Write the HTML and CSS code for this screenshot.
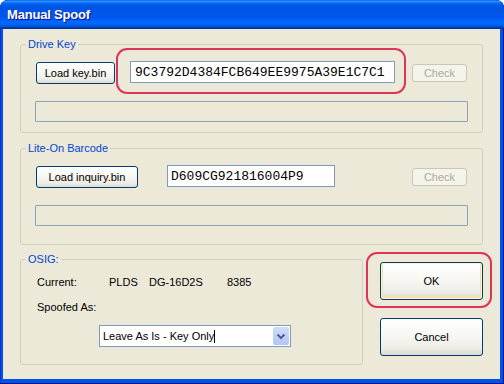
FILE: index.html
```html
<!DOCTYPE html>
<html>
<head>
    <title>Manual Spoof</title>
    <link rel="stylesheet" href="styles.css">
</head>
<body>
    <div class="window">
        <div class="titlebar">
            <span class="title">Manual Spoof</span>
        </div>

        <div class="client">
            <fieldset class="group">
                <legend>Drive Key</legend>
                <div class="group-body body-key">
                    <div class="row">
                        <button class="btn btn-key">Load key.bin</button>
                        <div class="mark mark-key">
                            <input class="field field-key" type="text" value="9C3792D4384FCB649EE9975A39E1C7C1" readonly>
                        </div>
                        <button class="btn btn-check" disabled>Check</button>
                    </div>
                    <div class="progress"></div>
                </div>
            </fieldset>

            <fieldset class="group group-barcode">
                <legend>Lite-On Barcode</legend>
                <div class="group-body body-barcode">
                    <div class="row">
                        <button class="btn btn-inquiry">Load inquiry.bin</button>
                        <input class="field field-barcode" type="text" value="D609CG921816004P9" readonly>
                        <button class="btn btn-check" disabled>Check</button>
                    </div>
                    <div class="progress"></div>
                </div>
            </fieldset>

            <div class="bottom">
                <fieldset class="group group-osig">
                    <legend>OSIG:</legend>
                    <div class="group-body body-osig">
                        <div class="info">
                            <span class="info-label">Current:</span>
                            <span class="info-vendor">PLDS</span>
                            <span class="info-model">DG-16D2S</span>
                            <span>8385</span>
                        </div>
                        <div class="info info-spoof">Spoofed As:</div>
                        <div class="combo">
                            <span class="combo-text">Leave As Is - Key Only</span><span class="caret"></span>
                            <span class="combo-btn">
                                <svg width="16" height="19" viewBox="0 0 16 19">
                                    <polyline points="4.5,7.5 8,11 11.5,7.5" fill="none" stroke="#4d6185" stroke-width="2"/>
                                </svg>
                            </span>
                        </div>
                    </div>
                </fieldset>

                <div class="actions">
                    <div class="mark mark-ok">
                        <button class="btn btn-big btn-ok">OK</button>
                    </div>
                    <button class="btn btn-big btn-cancel">Cancel</button>
                </div>
            </div>
        </div>
    </div>
</body>
</html>
```

FILE: styles.css
```css
body {
    margin: 0;
    background-color: #ffffff;
    font-family: "Liberation Sans", Arial, sans-serif;
    font-size: 11px;
}

.window {
    width: 504px;
    height: 384px;
    display: flex;
    flex-direction: column;
    background-color: #0054e3;
    border-radius: 8px 8px 0 0;
    box-shadow: inset -1px -1px #00138c, inset 1px 1px #0831d9;
    overflow: hidden;
}

.titlebar {
    height: 29px;
    flex: none;
    display: flex;
    align-items: center;
    padding-left: 7px;
    border-radius: 8px 8px 0 0;
    background: linear-gradient(180deg, #0058ee 0%, #3593ff 4%, #288eff 6%, #127dff 8%, #036ffc 10%, #0262ee 14%, #0057e5 20%, #0054e3 24%, #0055eb 56%, #005bf5 66%, #026afe 76%, #0062ef 86%, #0052d6 92%, #0040ab 94%, #003092 100%);
}

.title {
    color: #ffffff;
    font-weight: bold;
    font-size: 13px;
    text-shadow: 1px 1px #0f1089;
    letter-spacing: -0.2px;
}

.client {
    flex: 1;
    margin: 0 4px 5px 3px;
    padding: 9px 17px 0 17px;
    background-color: #ece9d8;
}

/* group boxes */
.group {
    margin: 0;
    padding: 0;
    border: 1px solid #d0d0bf;
    border-radius: 3px;
    width: 463px;
    box-sizing: border-box;
}

.group legend {
    margin-left: 5px;
    padding: 0 2px;
    line-height: 13px;
    color: #0046d5;
}

.group-barcode {
    margin-top: 9px;
}

.bottom {
    margin-top: 8px;
    display: flex;
    align-items: flex-start;
}

.group-osig {
    width: 343px;
}

.group-body {
    padding: 11px 14px 10px;
}

.body-barcode {
    padding-bottom: 18px;
}

.body-osig {
    padding: 10px 15px 17px 16px;
}

.row {
    display: flex;
    align-items: center;
    height: 22px;
    padding: 0 1px;
}

.progress {
    margin-top: 17px;
    height: 21px;
    box-sizing: border-box;
    border: 1px solid #8ea3ba;
    border-radius: 1px;
}

/* buttons */
.btn {
    box-sizing: border-box;
    height: 22px;
    padding: 0;
    font-family: "Liberation Sans", Arial, sans-serif;
    font-size: 11px;
    color: #000000;
    border: 1px solid #003c74;
    border-radius: 3px;
    background: linear-gradient(180deg, #ffffff 0%, #f8f7f3 45%, #eeede7 80%, #dcd8cd 100%);
}

.btn-key {
    width: 79px;
}

.btn-inquiry {
    width: 102px;
}

.btn-check {
    width: 55px;
    height: 18px;
    margin-left: auto;
    color: #aca899;
    border-color: #c9c7ba;
    background: #f5f4ea;
}

.btn-big {
    width: 103px;
    height: 38px;
}

.btn-ok {
    box-shadow: inset 0 0 0 1px #fdf1cc, inset 0 -1px 0 2px #f9e2a6;
}

.btn-cancel {
    margin-top: 18px;
}

/* text fields */
.field {
    box-sizing: border-box;
    height: 22px;
    margin: 0;
    border: 1px solid #7f9db9;
    background-color: #ffffff;
    font-family: "Liberation Mono", "Courier New", monospace;
    font-size: 13px;
    color: #000000;
    outline: none;
}

.field-key {
    width: 265px;
    padding: 0 0 0 4px;
    display: block;
}

.field-barcode {
    width: 168px;
    padding: 0 0 0 3px;
    margin-left: 29px;
    margin-top: -2px;
}

/* red highlight rings */
.mark {
    position: relative;
}

.mark::after {
    content: "";
    position: absolute;
    border: 2px solid #dd3558;
    border-radius: 11px;
    pointer-events: none;
}

.mark-key {
    margin-left: 15px;
    margin-top: -2px;
}

.mark-key::after {
    left: -14px;
    right: -11px;
    top: -13px;
    bottom: -11px;
}

.mark-ok::after {
    left: -14px;
    right: -9px;
    top: -10px;
    bottom: -8px;
}

/* osig section */
.info {
    display: flex;
    line-height: 13px;
}

.info-label {
    width: 72px;
}

.info-vendor {
    width: 40px;
}

.info-model {
    width: 78px;
}

.info-spoof {
    margin-top: 12px;
}

.combo {
    display: flex;
    align-items: center;
    box-sizing: border-box;
    width: 192px;
    height: 22px;
    margin: 11px 0 0 62px;
    padding: 0 1px 0 3px;
    border: 1px solid #7f9db9;
    background-color: #ffffff;
}

.caret {
    width: 1px;
    height: 13px;
    background-color: #000000;
}

.combo-btn {
    margin-left: auto;
    width: 16px;
    height: 18px;
    border-radius: 2px;
    background: linear-gradient(180deg, #cfdcfd 0%, #bccefa 60%, #b0c4f6 100%);
    display: flex;
}

.actions {
    margin-left: 17px;
    padding-top: 9px;
    display: flex;
    flex-direction: column;
}
```
